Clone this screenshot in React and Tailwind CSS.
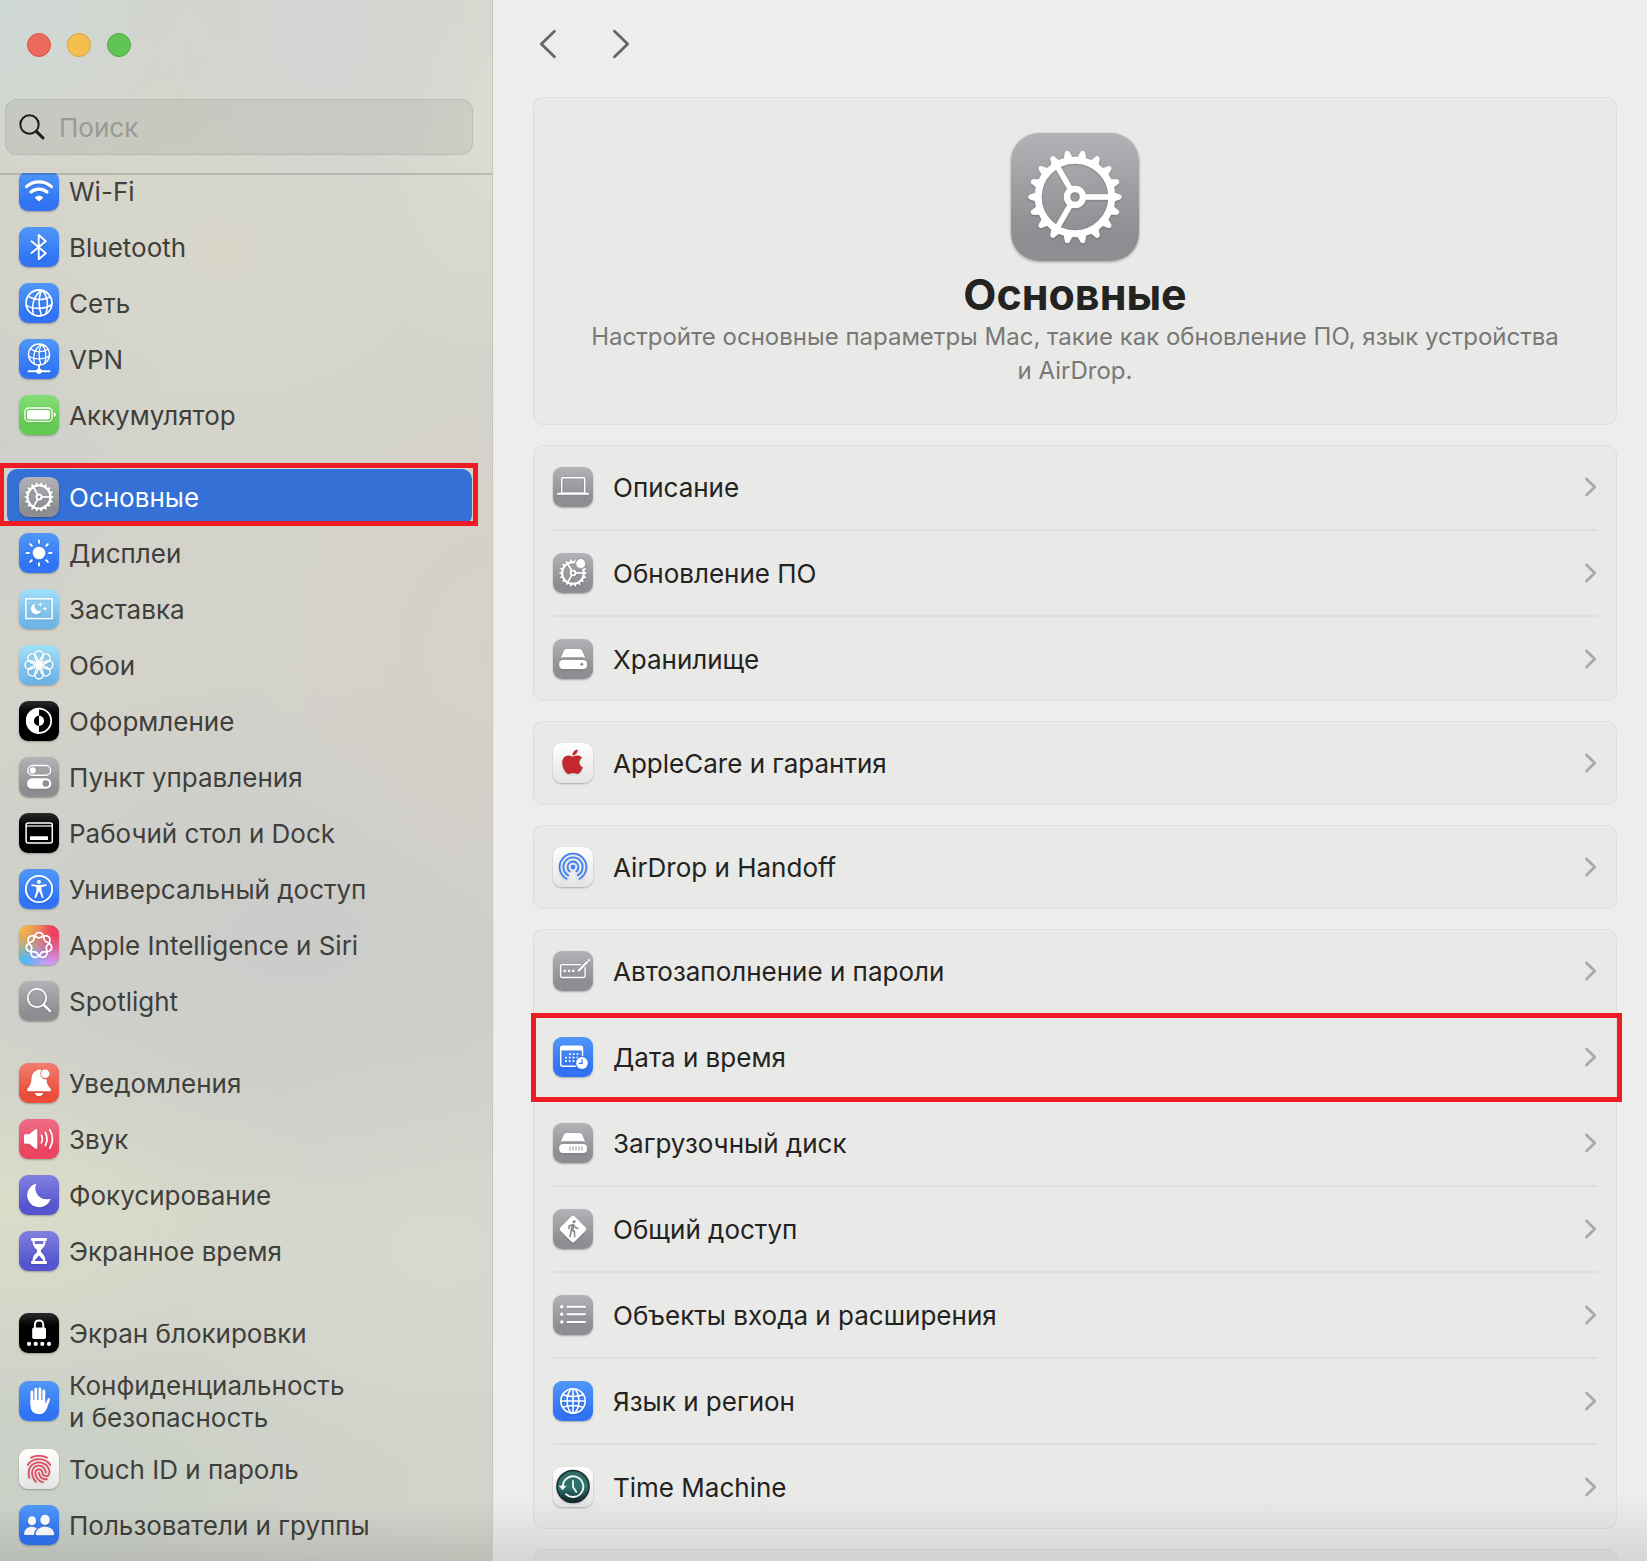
import { FaApple } from "react-icons/fa";
import { IoFingerPrint } from "react-icons/io5";
import { MdDirectionsWalk } from "react-icons/md";

const TILE = {
  blue: "bg-linear-to-b from-[#5097f8] to-[#3074f5] to-80%",
  green: "bg-linear-to-b from-[#83de76] to-[#62c952] to-80%",
  gray: "bg-linear-to-b from-[#b3b2b7] to-[#8e8d92] to-80%",
  sky: "bg-linear-to-b from-[#a2e0f8] to-[#6db5e8] to-90%",
  black: "bg-linear-to-b from-[#2b2b2b] to-black to-50%",
  red: "bg-linear-to-b from-[#f07c6c] to-[#eb4d3b] to-80%",
  pink: "bg-linear-to-b from-[#ee6c86] to-[#eb445e] to-80%",
  indigo: "bg-linear-to-b from-[#8280e0] to-[#5654ce] to-80%",
  white: "bg-linear-to-b from-white to-[#e4e4e4]",
  siri: "bg-[radial-gradient(circle_at_0%_0%,#f6b13d_10%,transparent_60%),radial-gradient(circle_at_100%_0%,#ee3f62_20%,transparent_70%),radial-gradient(circle_at_100%_100%,#cf9bfb_15%,transparent_65%),radial-gradient(circle_at_20%_100%,#45bdf5_10%,transparent_75%)] bg-[#c79aa0]",
};

/* ---------- glyphs, drawn on a 40×40 grid ---------- */

const teeth = Array.from({ length: 18 }, (_, i) => i * 20);

function GearShape() {
  return (
    <g fill="none" stroke="#fff">
      <circle cx="64" cy="64" r="36.8" strokeWidth="7" />
      <circle cx="64" cy="64" r="8" strokeWidth="6.4" />
      {[0, 120, 240].map((a) => (
        <path key={a} d="M74 64H100" strokeWidth="5.6" transform={`rotate(${a} 64 64)`} />
      ))}
      {teeth.map((a) => (
        <path
          key={a}
          d="M102 59.6L109.4 62.2Q111.4 64 109.4 65.8L102 68.4Z"
          fill="#fff"
          strokeWidth="1"
          strokeLinejoin="round"
          transform={`rotate(${a} 64 64)`}
        />
      ))}
    </g>
  );
}

const GlobeLines = () => (
  <g fill="none" stroke="#fff" strokeWidth="1.6">
    <circle cx="20" cy="20" r="13" strokeWidth="1.8" />
    <path d="M23 7.3C15.500 12 12 21 14.400 31.700M23 7.300C19 14 19.500 25 22.500 32.600M23 7.300C28.500 12 30 22 27 30.800" />
    <path d="M9.300 12.800C15 17.500 25 17.800 31.300 13.600M7.300 22C13 26.600 26 26.600 32.800 21.500" />
  </g>
);

const driveTop = "M13.300 10h13.400q1.600 0 2.300 1.500l3.200 7.200q-1.200-.5-2.500-.5H10.300q-1.300 0-2.500.5l3.200-7.200Q11.700 10 13.300 10Z";

const siriPath = (() => {
  const pts = [];
  for (let i = 0; i < 280; i++) {
    const t = (i / 280) * Math.PI * 4;
    const r = 10.2 + 2.7 * Math.cos(3.5 * t);
    pts.push(`${(20 + r * Math.sin(t)).toFixed(2)} ${(20.4 - r * Math.cos(t)).toFixed(2)}`);
  }
  return `M${pts.join("L")}Z`;
})();

const GLYPHS = {
  wifi: (
    <g fill="none" stroke="#fff" strokeLinecap="round">
      <path d="M7.500 15.700A18.400 18.400 0 0 1 32.500 15.700" strokeWidth="3.200" />
      <path d="M12 21A12.400 12.400 0 0 1 28 21" strokeWidth="3.200" />
      <path d="M16.800 26.600Q20 24.200 23.200 26.600L20 29.700Z" fill="#fff" strokeWidth="1.500" strokeLinejoin="round" />
    </g>
  ),
  bluetooth: (
    <path d="M12.500 14.300L26.800 26.200L19.700 32.200V8L26.800 14.200L12.500 26" fill="none" stroke="#fff" strokeWidth="1.900" strokeLinecap="round" strokeLinejoin="round" />
  ),
  network: <GlobeLines />,
  vpn: (
    <g>
      <g transform="translate(3.8 -.7) scale(.81)"><GlobeLines /></g>
      <path d="M20 26V32M9.500 32.300H30.500" stroke="#fff" strokeWidth="1.900" strokeLinecap="round" />
      <circle cx="20" cy="32.300" r="2.700" fill="#fff" />
    </g>
  ),
  battery: (
    <g fill="#fff">
      <rect x="5.900" y="13" width="27.200" height="13.400" rx="4" fill="none" stroke="#fff" strokeWidth="1.300" />
      <rect x="8" y="15" width="23" height="9.400" rx="2.200" />
      <path d="M34.900 17.300Q36.800 18 36.800 19.700T34.900 22.100Z" />
    </g>
  ),
  gear: <g transform="scale(.3125)"><GearShape /></g>,
  displays: (
    <g stroke="#fff" strokeWidth="2" strokeLinecap="round">
      <circle cx="20" cy="20" r="6.300" fill="#fff" stroke="none" />
      {[0, 45, 90, 135, 180, 225, 270, 315].map((a) => (
        <path key={a} d="M20 9.800V7.500" transform={`rotate(${a} 20 20)`} />
      ))}
    </g>
  ),
  screensaver: (
    <g fill="#fff">
      <rect x="6.900" y="9.800" width="26.200" height="19.800" fill="none" stroke="#fff" strokeWidth="1.500" />
      <path d="M16 14.700A5.300 5.300 0 1 0 22.300 21.500A5 5 0 0 1 16 14.700Z" />
      <path d="M21.400 13.300L22 15L23.700 15.600L22 16.200L21.400 17.900L20.800 16.200L19.100 15.600L20.800 15ZM25.900 17L26.600 19L28.600 19.700L26.600 20.400L25.900 22.400L25.200 20.400L23.200 19.700L25.200 19Z" />
    </g>
  ),
  wallpaper: (
    <g fill="none" stroke="#fff" strokeWidth="1.500">
      {[0, 45, 90, 135, 180, 225, 270, 315].map((a) => (
        <path key={a} d="M20 20C18 17.500 15.800 13.800 15.800 10.300A4.200 4.200 0 0 1 24.200 10.300C24.200 13.800 22 17.500 20 20Z" transform={`rotate(${a} 20 20)`} />
      ))}
    </g>
  ),
  appearance: (
    <g>
      <circle cx="20" cy="19.800" r="12.200" fill="none" stroke="#fff" strokeWidth="1.800" />
      <path d="M20 6.800A13 13 0 0 0 20 32.800Z" fill="#fff" />
      <path d="M20 14.700A5.100 5.100 0 0 0 20 24.900Z" fill="#000" />
      <path d="M20 14.700A5.100 5.100 0 0 1 20 24.900Z" fill="#fff" />
    </g>
  ),
  control: (
    <g fill="#fff">
      <rect x="8.800" y="8.600" width="22.800" height="9.600" rx="4.800" fill="none" stroke="#fff" strokeWidth="1.500" />
      <circle cx="13.800" cy="13.400" r="3.100" />
      <rect x="8" y="21.200" width="24.300" height="10.600" rx="5.300" />
      <circle cx="26.800" cy="26.500" r="3.300" fill="#8e8d92" />
    </g>
  ),
  dock: (
    <g fill="none" stroke="#fff" strokeWidth="1.500">
      <rect x="7.100" y="9.900" width="26.200" height="20" rx="2" />
      <path d="M7 13H33.300" strokeWidth="1.200" />
      <rect x="11" y="23.200" width="18" height="3.800" rx=".6" fill="#fff" stroke="none" />
    </g>
  ),
  accessibility: (
    <g fill="#fff">
      <circle cx="20" cy="20" r="13.200" fill="none" stroke="#fff" strokeWidth="1.800" />
      <circle cx="20" cy="12.900" r="2" />
      <path d="M13.200 15.300L18.300 16H21.700L26.800 15.300Q27.800 15.300 27.800 16.200Q27.700 16.800 26.900 17L22.600 18V21.600L24.500 28.200Q24.600 29.200 23.700 29.300Q23 29.300 22.700 28.500L20.400 22.800H19.600L17.300 28.500Q17 29.300 16.300 29.300Q15.400 29.200 15.500 28.200L17.400 21.600V18L13.100 17Q12.300 16.800 12.200 16.200Q12.200 15.300 13.200 15.300Z" />
    </g>
  ),
  siri: <path d={siriPath} fill="none" stroke="#fff" strokeWidth="1.800" strokeLinejoin="round" />,
  spotlight: (
    <g fill="none" stroke="#fff" strokeLinecap="round">
      <circle cx="18" cy="17" r="9.200" strokeWidth="1.700" />
      <path d="M24.800 23.900L31 30" strokeWidth="2.400" />
    </g>
  ),
  bell: (
    <g fill="#fff">
      <path d="M20 6.500Q22 6.500 22.500 7.300A5.600 5.600 0 0 0 27.500 16.300Q27.500 22 31.500 25.600Q32.700 28.200 30.800 28.200H9.200Q7.300 28.200 8.500 25.600Q12.300 22 12.500 15.500Q12.800 9.500 17.600 7.800Q18 6.500 20 6.500Z" />
      <circle cx="26.200" cy="10.700" r="4.300" />
      <path d="M16 30H24Q23.500 33.100 20 33.100T16 30Z" />
    </g>
  ),
  sound: (
    <g fill="none" stroke="#fff" strokeWidth="1.700" strokeLinecap="round">
      <path d="M6.300 15.300H10.300L16 10.600Q18.300 9.300 18.300 11.500V28.500Q18.300 30.700 16 29.400L10.300 24.700H6.300Q5 24.700 5 23.400V16.600Q5 15.300 6.300 15.300Z" fill="#fff" stroke="none" />
      <path d="M22.400 16.200Q24.300 20 22.400 23.800M26.400 13.500Q29.600 20 26.400 26.500M30.800 10.700Q36.200 20 30.800 29.300" />
    </g>
  ),
  moon: <path d="M16.200 8.900Q17.500 8.300 16.900 9.900C14.400 18 21.500 26.200 30.400 23.900Q31.900 23.600 31.200 25A12 12 0 1 1 16.200 8.900Z" fill="#fff" />,
  hourglass: (
    <g fill="#fff">
      <rect x="12" y="7" width="16" height="3" rx="1.200" />
      <rect x="12" y="30" width="16" height="3" rx="1.200" />
      <path d="M13.500 9C13.500 15 15.500 16.500 18 18.800V21.200C15.500 23.500 13.500 25 13.500 31H26.500C26.500 25 24.500 23.500 22 21.200V18.800C24.500 16.500 26.500 15 26.500 9Z" />
      <path d="M20 17.500V24.500L16 28.900Q15.600 29.700 15.400 30H24.600Q24.400 29.700 24 28.900L20 24.500Z" fill="#5654ce" />
      <path d="M15.500 10H24.500Q24.500 11.500 24 13H16Q15.500 11.500 15.500 10Z" fill="#7270da" />
    </g>
  ),
  lock: (
    <g fill="#fff">
      <rect x="13.200" y="14.500" width="13.800" height="11.600" rx="1.800" />
      <path d="M15.900 15V11.800Q15.900 7.500 20.100 7.500T24.300 11.800V15" fill="none" stroke="#fff" strokeWidth="1.900" />
      {[10, 16.700, 23.300, 30].map((x) => <circle key={x} cx={x} cy="30.900" r="2.100" />)}
    </g>
  ),
  hand: (
    <g fill="none" stroke="#fff" strokeLinecap="round">
      <path d="M12.900 11V24M16.800 8.300V22M20.900 7.900V22M24.800 10V23" strokeWidth="2.900" />
      <path d="M11.450 19H26.200V23.300L28.700 17.900Q29.500 16.700 30.500 17.200Q31.400 17.700 31 19L27.500 28.300Q25.500 33.300 20 33.300Q11.450 33 11.450 24Z" fill="#fff" stroke="none" />
    </g>
  ),
  touchid: <IoFingerPrint x="5" y="5" size="30" color="#e04c62" />,
  users: (
    <g fill="#fff">
      <ellipse cx="13" cy="15.700" rx="4.100" ry="4.500" />
      <ellipse cx="26" cy="14.900" rx="4.700" ry="5.100" />
      <path d="M6.400 30Q5 30 5.100 28.400C5.500 24 8.800 21.700 13 21.700Q15.800 21.700 18 23.200Q15 25.800 14.900 30Z" />
      <path d="M17.800 30.200Q16.500 30.200 16.700 28.500C17.500 23.800 21.200 21.700 26 21.700S34.400 23.800 35.200 28.500Q35.400 30.200 34.100 30.200Z" />
    </g>
  ),
  laptop: (
    <g fill="none" stroke="#fff">
      <rect x="8.700" y="10.700" width="23" height="15.500" rx="1.200" strokeWidth="1.400" />
      <path d="M5 26.700H35" strokeWidth="2" strokeLinecap="round" />
    </g>
  ),
  update: (
    <g>
      <g transform="translate(1.2 1.2) scale(.294)"><GearShape /></g>
      <circle cx="27.700" cy="10.600" r="6" fill="#a5a4a9" />
      <circle cx="27.700" cy="10.600" r="4.500" fill="#fff" />
    </g>
  ),
  storage: (
    <g fill="#fff">
      <path d={driveTop} />
      <rect x="6.200" y="21" width="27.800" height="9" rx="4" />
      <circle cx="28.800" cy="25.300" r="1.500" fill="#8e8d92" />
    </g>
  ),
  apple: <FaApple x="5.500" y="4.800" size="28" color="#c4282f" />,
  airdrop: (
    <g fill="none" stroke="#3b7ff5" strokeWidth="1.800">
      <circle cx="20" cy="20" r="2.300" fill="#3b7ff5" stroke="none" />
      <path d="M17.300 24.800A5.500 5.500 0 1 1 22.700 24.800M15.900 28.700A9.600 9.600 0 1 1 24.100 28.700M14.300 32.200A13.400 13.400 0 1 1 25.700 32.200" />
    </g>
  ),
  passwords: (
    <g fill="none" stroke="#fff" strokeWidth="1.400" strokeLinecap="round">
      <path d="M27.500 13.600H9Q7.600 13.600 7.600 15V25.100Q7.600 26.500 9 26.500H30.700Q32.100 26.500 32.100 25.100V16.800" />
      <path d="M25.800 19.500L34 11.300M35.900 9.400L36.200 9.100" strokeWidth="2.200" />
      <path d="M11.600 20.100H11.700M15.900 20.100H16M20.200 20.100H20.300" strokeWidth="2.500" />
    </g>
  ),
  date: (
    <g fill="none" stroke="#fff">
      <rect x="7.700" y="9.200" width="21.800" height="20" rx="2" strokeWidth="1.500" />
      <path d="M8 9.500H29.500V13.500H8Z" fill="#fff" stroke="none" />
      <path d="M16 17.200H27M12 20.700H27M12 24.200H24" strokeWidth="1.800" strokeDasharray="1.800 2" />
      <circle cx="29" cy="26" r="7" fill="#3478f6" stroke="none" />
      <circle cx="29" cy="26" r="5.900" fill="#fff" stroke="none" />
      <path d="M29 22.600V26.300H26.300" stroke="#3478f6" strokeWidth="1.300" strokeLinecap="round" />
    </g>
  ),
  startup: (
    <g fill="#fff">
      <path d={driveTop} />
      <rect x="6.200" y="21" width="27.800" height="9" rx="4" />
      <path d="M17 23.500V27.500M20 23.500V27.500M23 23.500V27.500M26 23.500V27.500M29 23.500V27.500" stroke="#8e8d92" />
    </g>
  ),
  sharing: (
    <g>
      <rect x="10" y="10" width="20" height="20" rx="2" fill="#fff" transform="rotate(45 20 20)" />
      <MdDirectionsWalk x="10.500" y="10" size="19" color="#8e8d92" />
    </g>
  ),
  list: (
    <g stroke="#fff" strokeWidth="1.900" strokeLinecap="round">
      {[11.700, 19.300, 27].map((y) => (
        <g key={y}>
          <circle cx="8.800" cy={y} r="1.700" fill="#fff" stroke="none" />
          <path d={`M14.500 ${y}H32`} />
        </g>
      ))}
    </g>
  ),
  globe: (
    <g fill="none" stroke="#fff" strokeWidth="1.600">
      <circle cx="20" cy="20" r="12.200" />
      <ellipse cx="20" cy="20" rx="5.900" ry="12.200" />
      <path d="M20 7.800V32.200M7.800 20H32.200M9.800 13.700Q20 17.400 30.200 13.700M9.800 26.300Q20 22.600 30.200 26.300" />
    </g>
  ),
  timemachine: (
    <g fill="none" stroke="#f2f6f5" strokeLinecap="round">
      <defs>
        <linearGradient id="tm" x1="0" y1="0" x2="0" y2="1">
          <stop offset="0" stopColor="#2c6c66" />
          <stop offset=".55" stopColor="#2c736b" />
          <stop offset="1" stopColor="#0d1f27" />
        </linearGradient>
      </defs>
      <circle cx="20" cy="19.500" r="16" fill="url(#tm)" stroke="#1d2b30" strokeWidth="1.600" />
      <path d="M9.700 19.500A10.300 10.300 0 1 1 13 27.200" strokeWidth="1.900" />
      <path d="M6.800 19H12.800L9.800 22.700Z" fill="#f2f6f5" strokeWidth=".8" strokeLinejoin="round" />
      <path d="M20 14V20L23.300 25" strokeWidth="1.800" />
    </g>
  ),
};

function Tile({ color, glyph }) {
  return (
    <span className={`block size-10 shrink-0 rounded-[9px] shadow-[0_1px_2px_rgba(0,0,0,0.28)] ${TILE[color]}`}>
      <svg viewBox="0 0 40 40" className="size-10 drop-shadow-[0_1px_1px_rgba(0,0,0,0.12)]" aria-hidden="true">
        {GLYPHS[glyph]}
      </svg>
    </span>
  );
}

/* ---------- data ---------- */

const SIDEBAR = [
  [
    ["Wi-Fi", "blue", "wifi"],
    ["Bluetooth", "blue", "bluetooth"],
    ["Сеть", "blue", "network"],
    ["VPN", "blue", "vpn"],
    ["Аккумулятор", "green", "battery"],
  ],
  [
    ["Основные", "gray", "gear"],
    ["Дисплеи", "blue", "displays"],
    ["Заставка", "sky", "screensaver"],
    ["Обои", "sky", "wallpaper"],
    ["Оформление", "black", "appearance"],
    ["Пункт управления", "gray", "control"],
    ["Рабочий стол и Dock", "black", "dock"],
    ["Универсальный доступ", "blue", "accessibility"],
    ["Apple Intelligence и Siri", "siri", "siri"],
    ["Spotlight", "gray", "spotlight"],
  ],
  [
    ["Уведомления", "red", "bell"],
    ["Звук", "pink", "sound"],
    ["Фокусирование", "indigo", "moon"],
    ["Экранное время", "indigo", "hourglass"],
  ],
  [
    ["Экран блокировки", "black", "lock"],
    ["Конфиденциальность\nи безопасность", "blue", "hand"],
    ["Touch ID и пароль", "white", "touchid"],
    ["Пользователи и группы", "blue", "users"],
  ],
];

const CARDS = [
  [
    ["Описание", "gray", "laptop"],
    ["Обновление ПО", "gray", "update"],
    ["Хранилище", "gray", "storage"],
  ],
  [["AppleCare и гарантия", "white", "apple"]],
  [["AirDrop и Handoff", "white", "airdrop"]],
  [
    ["Автозаполнение и пароли", "gray", "passwords"],
    ["Дата и время", "blue", "date"],
    ["Загрузочный диск", "gray", "startup"],
    ["Общий доступ", "gray", "sharing"],
    ["Объекты входа и расширения", "gray", "list"],
    ["Язык и регион", "blue", "globe"],
    ["Time Machine", "white", "timemachine"],
  ],
];

const CARD = "rounded-[10px] bg-[#e9e9e7] shadow-[inset_0_0_0_1px_#dededc]";

/* ---------- sidebar ---------- */

function SidebarItem({ label, color, glyph }) {
  const active = label === "Основные";
  const tall = label.includes("\n");
  return (
    <li className="relative pr-[20px] pl-[7px]">
      <button
        type="button"
        aria-current={active ? "page" : undefined}
        className={`flex w-full items-center gap-2.5 rounded-[10px] pl-3 text-left text-[26px] leading-8 whitespace-pre ${
          tall ? "h-20" : "h-14"
        } ${active ? "bg-[#3470d6] text-white" : "text-[#3f403c]"}`}
      >
        <Tile color={color} glyph={glyph} />
        <span className="pt-0.5">{label}</span>
      </button>
      {active && (
        <span className="pointer-events-none absolute -top-1.5 right-[14px] bottom-[-1px] left-[-1px] border-[5px] border-[#ee1c24]" />
      )}
    </li>
  );
}

function Sidebar() {
  return (
    <aside className="flex w-[493px] shrink-0 flex-col border-r border-[#c4c5be] bg-[#d3d3cb] bg-[radial-gradient(ellipse_45%_12%_at_0%_0%,#d0d9d6,transparent),radial-gradient(ellipse_35%_14%_at_65%_2%,#d3d6d5,transparent),radial-gradient(ellipse_30%_16%_at_100%_8%,#dbdcd2,transparent),radial-gradient(ellipse_70%_16%_at_45%_16%,#d8d7ca,transparent),radial-gradient(ellipse_35%_16%_at_0%_26%,#cdcfcb,transparent),radial-gradient(ellipse_50%_20%_at_100%_42%,#d6d0c8,transparent),radial-gradient(ellipse_90%_18%_at_60%_60%,#cbcbca,transparent),radial-gradient(ellipse_70%_12%_at_0%_77%,#d9ddc8,transparent),radial-gradient(ellipse_60%_14%_at_90%_80%,#d8d8d0,transparent),radial-gradient(ellipse_100%_12%_at_0%_95%,#c8d0c6,transparent)]">
      <div className="flex gap-4 pt-[33px] pl-[27px]">
        <button type="button" aria-label="Закрыть" className="size-6 rounded-full border border-[#d95346] bg-[#ed6a5e]" />
        <button type="button" aria-label="Свернуть" className="size-6 rounded-full border border-[#d9a03c] bg-[#f5bf4f]" />
        <button type="button" aria-label="Развернуть" className="size-6 rounded-full border border-[#4ea73f] bg-[#61c554]" />
      </div>
      <label className="mt-[42px] mr-[19px] mb-[18px] ml-[5px] flex h-14 items-center gap-[14px] rounded-xl border border-black/8 bg-black/6 pl-[13px]">
        <svg viewBox="0 0 26 26" className="size-[26px] shrink-0" fill="none" stroke="#1c1c1a" strokeLinecap="round" aria-hidden="true">
          <circle cx="10.500" cy="10.500" r="9.200" strokeWidth="2" />
          <path d="M17.600 17.600L24 24" strokeWidth="3" />
        </svg>
        <input
          type="search"
          aria-label="Поиск"
          placeholder="Поиск"
          className="w-full min-w-0 bg-transparent pt-0.5 text-[26px] leading-8 text-[#3f403c] outline-none placeholder:text-[#999a94]"
        />
      </label>
      <nav className="relative min-h-0 flex-1 overflow-hidden" aria-label="Разделы">
        <div className="-mt-2.5 flex flex-col gap-[26px]">
          {SIDEBAR.map((group, i) => (
            <ul key={i}>
              {group.map(([label, color, glyph]) => (
                <SidebarItem key={label} label={label} color={color} glyph={glyph} />
              ))}
            </ul>
          ))}
        </div>
        <div className="absolute inset-x-0 top-0 h-0.5 bg-black/15" />
        <div className="pointer-events-none absolute inset-x-0 bottom-0 h-14 bg-linear-to-b from-transparent to-black/10" />
      </nav>
    </aside>
  );
}

/* ---------- content ---------- */

function Row({ label, color, glyph }) {
  return (
    <li className="group relative">
      <button type="button" className="flex h-[84px] w-full items-center gap-5 px-5 text-left text-[26px] leading-8 text-[#232321]">
        <Tile color={color} glyph={glyph} />
        <span className="flex-1 pt-0.5">{label}</span>
        <svg viewBox="0 0 12 20" className="h-5 w-3" fill="none" stroke="#aaaaa8" strokeWidth="2.800" strokeLinecap="round" strokeLinejoin="round" aria-hidden="true">
          <path d="M1.500 2L9.800 10L1.500 18" />
        </svg>
      </button>
      <div className="mx-5 h-0.5 bg-[#dededc] group-last:hidden" />
      {label === "Дата и время" && (
        <span className="pointer-events-none absolute -top-0.5 right-[-5px] bottom-[-1px] -left-0.5 z-10 border-[5px] border-[#ee1c24]" />
      )}
    </li>
  );
}

export default function App() {
  return (
    <div className="flex h-screen overflow-hidden bg-[#ededeb] font-['Inter','Liberation_Sans',sans-serif]">
      <Sidebar />
      <main className="relative flex-1 overflow-hidden">
        <div className="flex gap-[41px] pt-7 pb-[37px] pl-[39px]">
          <button type="button" aria-label="Назад" className="size-8">
            <svg viewBox="0 0 32 32" className="size-8" fill="none" stroke="#666664" strokeWidth="2.800" strokeLinecap="round" strokeLinejoin="round">
              <path d="M22.500 3.300L9.300 16L22.500 28.700" />
            </svg>
          </button>
          <button type="button" aria-label="Вперёд" className="size-8">
            <svg viewBox="0 0 32 32" className="size-8" fill="none" stroke="#666664" strokeWidth="2.800" strokeLinecap="round" strokeLinejoin="round">
              <path d="M9.500 3.300L22.700 16L9.500 28.700" />
            </svg>
          </button>
        </div>
        <div className="flex flex-col gap-5 pr-[30px] pl-10">
          <section className={`${CARD} flex flex-col items-center px-10 pt-9 pb-[37px] text-center`}>
            <span className="block size-32 rounded-[28px] bg-linear-to-b from-[#b3b2b7] to-[#8e8d92] to-80% shadow-[0_1px_3px_rgba(0,0,0,0.35)]">
              <svg viewBox="0 0 128 128" className="size-32 drop-shadow-[0_1px_1px_rgba(0,0,0,0.2)]" aria-hidden="true">
                <GearShape />
              </svg>
            </span>
            <h1 className="mt-2 text-[43px] leading-[51px] font-bold text-[#232321]">Основные</h1>
            <p className="text-[24px] leading-[34px] text-[#787876]">
              Настройте основные параметры Mac, такие как обновление ПО, язык устройства
              <br />и AirDrop.
            </p>
          </section>
          {CARDS.map((rows, i) => (
            <ul key={i} className={CARD}>
              {rows.map(([label, color, glyph]) => (
                <Row key={label} label={label} color={color} glyph={glyph} />
              ))}
            </ul>
          ))}
          <div className={`${CARD} h-[84px]`} />
        </div>
        <div className="pointer-events-none absolute inset-x-0 bottom-0 h-16 bg-linear-to-b from-transparent to-black/10" />
      </main>
    </div>
  );
}
